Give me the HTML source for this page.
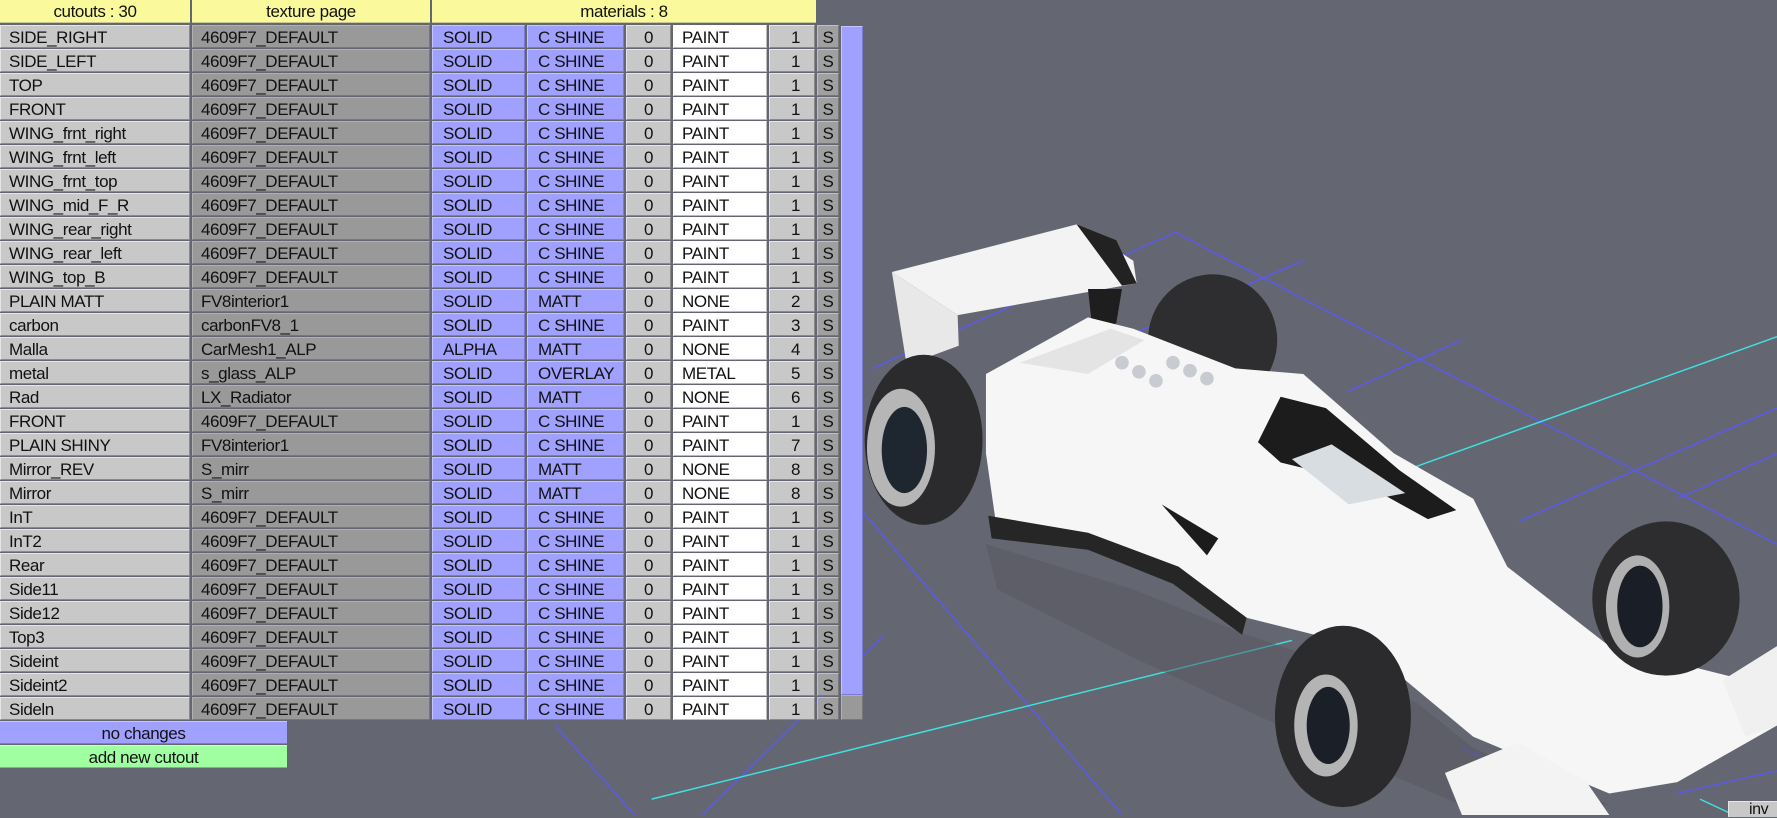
<!DOCTYPE html>
<html><head><meta charset="utf-8"><style>
*{margin:0;padding:0;box-sizing:border-box}
body{width:1777px;height:815px;background:#646671;overflow:hidden;position:relative;font-family:"Liberation Sans Narrow","Liberation Sans",sans-serif;font-size:17px;letter-spacing:-0.4px;color:#111}
svg{position:absolute;left:0;top:0}
.h{position:absolute;top:0;height:23px;background:#fafa9c;text-align:center;line-height:23px;border-bottom:1px solid #c8c890}
.r{position:absolute;left:0;height:24px;width:840px}
.r div{position:absolute;top:0;height:23px;line-height:23px;border:1px solid;border-color:#e6e6e6 #8a8a8a #8a8a8a #e6e6e6;white-space:nowrap;overflow:hidden}
.a{left:0;width:190px;background:#c8c8c8;padding-left:8px}
.b{left:192px;width:238px;background:#999;padding-left:8px;border-color:#b0b0b0 #777 #777 #b0b0b0!important}
.c{left:432px;width:93px;background:#a0a0ff;padding-left:10px;border-color:#c4c4ff #7a7ad0 #7a7ad0 #c4c4ff!important}
.d{left:527px;width:97px;background:#a0a0ff;padding-left:10px;border-color:#c4c4ff #7a7ad0 #7a7ad0 #c4c4ff!important}
.e{left:626px;width:45px;background:#c8c8c8;text-align:center}
.f{left:673px;width:94px;background:#fff;padding-left:8px;border-color:#fff #bbb #bbb #fff!important}
.g{left:769px;width:46px;background:#c8c8c8;text-align:right;padding-right:14px}
.s{left:817px;width:22px;background:#a0a0a0;text-align:center;border-color:#c0c0c0 #777 #777 #c0c0c0!important}
.btn{position:absolute;left:0;width:287px;height:23px;line-height:23px;text-align:center}
</style></head><body>
<svg width="1777" height="815" viewBox="0 0 1568 719" preserveAspectRatio="none">
<g stroke="#5a5af0" stroke-width="1.3" fill="none">
<line x1="770" y1="325" x2="1037" y2="205"/>
<line x1="1037" y1="205" x2="1568" y2="480"/>
<line x1="900" y1="330" x2="1568" y2="640"/>
<line x1="1150" y1="230" x2="940" y2="320"/>
<line x1="1290" y1="300" x2="1190" y2="345"/>
<line x1="1568" y1="400" x2="1480" y2="440"/>
<line x1="760" y1="450" x2="990" y2="719"/>
<line x1="780" y1="560" x2="620" y2="719"/>
<line x1="1480" y1="700" x2="1568" y2="680"/>
<line x1="1340" y1="460" x2="1568" y2="360"/>
<line x1="1290" y1="660" x2="1420" y2="719"/>
<line x1="1420" y1="700" x2="1568" y2="630"/>
<line x1="490" y1="640" x2="560" y2="719"/>
</g>
<g stroke="#3ee0e0" stroke-width="1.3">
<line x1="1240" y1="415" x2="1568" y2="297"/>
<line x1="575" y1="705" x2="1140" y2="565"/>
<line x1="1500" y1="705" x2="1530" y2="719"/>
</g>
<polygon points="870,480 1000,520 1100,560 1160,580 1250,620 1300,660 1420,710 1300,715 1150,650 1000,580 880,520" fill="#55565f" opacity="0.5"/>
<ellipse cx="1070" cy="300" rx="57" ry="58" fill="#2e2e30"/>
<polygon points="787,240 950,198 1000,230 1003,250 845,278" fill="#f3f3f3"/>
<polygon points="950,198 985,212 1003,250 990,252" fill="#222"/>
<polygon points="787,240 845,278 846,305 800,322" fill="#e8e8e8"/>
<polygon points="960,255 990,255 985,285 965,300" fill="#1e1e1e"/>
<ellipse cx="815" cy="388" rx="52" ry="75" fill="#2b2b2d"/>
<ellipse cx="795" cy="395" rx="30" ry="52" fill="#b6b6b6"/>
<ellipse cx="798" cy="397" rx="20" ry="38" fill="#1e2630"/>
<polygon points="870,330 960,280 1000,290 1090,325 1150,330 1230,400 1300,440 1330,500 1420,570 1540,600 1568,640 1480,690 1420,700 1300,650 1240,600 1160,560 1100,545 1040,500 960,470 880,470 870,400" fill="#f6f6f6"/>
<polygon points="872,455 960,470 1040,500 1100,545 1096,560 1035,515 960,485 875,475" fill="#262626"/>
<polygon points="900,320 980,290 1010,300 960,330" fill="#e4e4e4"/>
<polygon points="1110,390 1130,350 1170,360 1235,415 1285,450 1260,458 1200,425 1130,408" fill="#1c1c1c"/>
<polygon points="1140,405 1175,392 1240,435 1190,445" fill="#d8dde2"/>
<polygon points="1025,445 1075,475 1065,490" fill="#1c1c1c"/>
<ellipse cx="1470" cy="528" rx="65" ry="68" fill="#2d2d2f"/>
<ellipse cx="1445" cy="535" rx="28" ry="45" fill="#b0b0b0"/>
<ellipse cx="1447" cy="535" rx="20" ry="36" fill="#1a1f27"/>
<ellipse cx="1185" cy="632" rx="60" ry="80" fill="#2b2b2d"/>
<ellipse cx="1170" cy="640" rx="28" ry="45" fill="#b4b4b4"/>
<ellipse cx="1172" cy="640" rx="19" ry="34" fill="#1b2028"/>
<polygon points="1275,682 1340,655 1400,690 1420,719 1290,719" fill="#f3f3f3"/>
<polygon points="1520,600 1568,570 1568,640 1540,650" fill="#f0f0f0"/>
<g fill="#c8ccd2"><circle cx="990" cy="320" r="6"/><circle cx="1005" cy="328" r="6"/><circle cx="1020" cy="336" r="6"/><circle cx="1035" cy="320" r="6"/><circle cx="1050" cy="327" r="6"/><circle cx="1065" cy="334" r="6"/></g>
</svg>

<div class="h" style="left:0;width:190px">cutouts : 30</div>
<div class="h" style="left:192px;width:238px">texture page</div>
<div class="h" style="left:432px;width:384px">materials : 8</div>

<div class="r" style="top:25px"><div class="a">SIDE_RIGHT</div><div class="b">4609F7_DEFAULT</div><div class="c">SOLID</div><div class="d">C SHINE</div><div class="e">0</div><div class="f">PAINT</div><div class="g">1</div><div class="s">S</div></div>
<div class="r" style="top:49px"><div class="a">SIDE_LEFT</div><div class="b">4609F7_DEFAULT</div><div class="c">SOLID</div><div class="d">C SHINE</div><div class="e">0</div><div class="f">PAINT</div><div class="g">1</div><div class="s">S</div></div>
<div class="r" style="top:73px"><div class="a">TOP</div><div class="b">4609F7_DEFAULT</div><div class="c">SOLID</div><div class="d">C SHINE</div><div class="e">0</div><div class="f">PAINT</div><div class="g">1</div><div class="s">S</div></div>
<div class="r" style="top:97px"><div class="a">FRONT</div><div class="b">4609F7_DEFAULT</div><div class="c">SOLID</div><div class="d">C SHINE</div><div class="e">0</div><div class="f">PAINT</div><div class="g">1</div><div class="s">S</div></div>
<div class="r" style="top:121px"><div class="a">WING_frnt_right</div><div class="b">4609F7_DEFAULT</div><div class="c">SOLID</div><div class="d">C SHINE</div><div class="e">0</div><div class="f">PAINT</div><div class="g">1</div><div class="s">S</div></div>
<div class="r" style="top:145px"><div class="a">WING_frnt_left</div><div class="b">4609F7_DEFAULT</div><div class="c">SOLID</div><div class="d">C SHINE</div><div class="e">0</div><div class="f">PAINT</div><div class="g">1</div><div class="s">S</div></div>
<div class="r" style="top:169px"><div class="a">WING_frnt_top</div><div class="b">4609F7_DEFAULT</div><div class="c">SOLID</div><div class="d">C SHINE</div><div class="e">0</div><div class="f">PAINT</div><div class="g">1</div><div class="s">S</div></div>
<div class="r" style="top:193px"><div class="a">WING_mid_F_R</div><div class="b">4609F7_DEFAULT</div><div class="c">SOLID</div><div class="d">C SHINE</div><div class="e">0</div><div class="f">PAINT</div><div class="g">1</div><div class="s">S</div></div>
<div class="r" style="top:217px"><div class="a">WING_rear_right</div><div class="b">4609F7_DEFAULT</div><div class="c">SOLID</div><div class="d">C SHINE</div><div class="e">0</div><div class="f">PAINT</div><div class="g">1</div><div class="s">S</div></div>
<div class="r" style="top:241px"><div class="a">WING_rear_left</div><div class="b">4609F7_DEFAULT</div><div class="c">SOLID</div><div class="d">C SHINE</div><div class="e">0</div><div class="f">PAINT</div><div class="g">1</div><div class="s">S</div></div>
<div class="r" style="top:265px"><div class="a">WING_top_B</div><div class="b">4609F7_DEFAULT</div><div class="c">SOLID</div><div class="d">C SHINE</div><div class="e">0</div><div class="f">PAINT</div><div class="g">1</div><div class="s">S</div></div>
<div class="r" style="top:289px"><div class="a">PLAIN MATT</div><div class="b">FV8interior1</div><div class="c">SOLID</div><div class="d">MATT</div><div class="e">0</div><div class="f">NONE</div><div class="g">2</div><div class="s">S</div></div>
<div class="r" style="top:313px"><div class="a">carbon</div><div class="b">carbonFV8_1</div><div class="c">SOLID</div><div class="d">C SHINE</div><div class="e">0</div><div class="f">PAINT</div><div class="g">3</div><div class="s">S</div></div>
<div class="r" style="top:337px"><div class="a">Malla</div><div class="b">CarMesh1_ALP</div><div class="c">ALPHA</div><div class="d">MATT</div><div class="e">0</div><div class="f">NONE</div><div class="g">4</div><div class="s">S</div></div>
<div class="r" style="top:361px"><div class="a">metal</div><div class="b">s_glass_ALP</div><div class="c">SOLID</div><div class="d">OVERLAY</div><div class="e">0</div><div class="f">METAL</div><div class="g">5</div><div class="s">S</div></div>
<div class="r" style="top:385px"><div class="a">Rad</div><div class="b">LX_Radiator</div><div class="c">SOLID</div><div class="d">MATT</div><div class="e">0</div><div class="f">NONE</div><div class="g">6</div><div class="s">S</div></div>
<div class="r" style="top:409px"><div class="a">FRONT</div><div class="b">4609F7_DEFAULT</div><div class="c">SOLID</div><div class="d">C SHINE</div><div class="e">0</div><div class="f">PAINT</div><div class="g">1</div><div class="s">S</div></div>
<div class="r" style="top:433px"><div class="a">PLAIN SHINY</div><div class="b">FV8interior1</div><div class="c">SOLID</div><div class="d">C SHINE</div><div class="e">0</div><div class="f">PAINT</div><div class="g">7</div><div class="s">S</div></div>
<div class="r" style="top:457px"><div class="a">Mirror_REV</div><div class="b">S_mirr</div><div class="c">SOLID</div><div class="d">MATT</div><div class="e">0</div><div class="f">NONE</div><div class="g">8</div><div class="s">S</div></div>
<div class="r" style="top:481px"><div class="a">Mirror</div><div class="b">S_mirr</div><div class="c">SOLID</div><div class="d">MATT</div><div class="e">0</div><div class="f">NONE</div><div class="g">8</div><div class="s">S</div></div>
<div class="r" style="top:505px"><div class="a">InT</div><div class="b">4609F7_DEFAULT</div><div class="c">SOLID</div><div class="d">C SHINE</div><div class="e">0</div><div class="f">PAINT</div><div class="g">1</div><div class="s">S</div></div>
<div class="r" style="top:529px"><div class="a">InT2</div><div class="b">4609F7_DEFAULT</div><div class="c">SOLID</div><div class="d">C SHINE</div><div class="e">0</div><div class="f">PAINT</div><div class="g">1</div><div class="s">S</div></div>
<div class="r" style="top:553px"><div class="a">Rear</div><div class="b">4609F7_DEFAULT</div><div class="c">SOLID</div><div class="d">C SHINE</div><div class="e">0</div><div class="f">PAINT</div><div class="g">1</div><div class="s">S</div></div>
<div class="r" style="top:577px"><div class="a">Side11</div><div class="b">4609F7_DEFAULT</div><div class="c">SOLID</div><div class="d">C SHINE</div><div class="e">0</div><div class="f">PAINT</div><div class="g">1</div><div class="s">S</div></div>
<div class="r" style="top:601px"><div class="a">Side12</div><div class="b">4609F7_DEFAULT</div><div class="c">SOLID</div><div class="d">C SHINE</div><div class="e">0</div><div class="f">PAINT</div><div class="g">1</div><div class="s">S</div></div>
<div class="r" style="top:625px"><div class="a">Top3</div><div class="b">4609F7_DEFAULT</div><div class="c">SOLID</div><div class="d">C SHINE</div><div class="e">0</div><div class="f">PAINT</div><div class="g">1</div><div class="s">S</div></div>
<div class="r" style="top:649px"><div class="a">Sideint</div><div class="b">4609F7_DEFAULT</div><div class="c">SOLID</div><div class="d">C SHINE</div><div class="e">0</div><div class="f">PAINT</div><div class="g">1</div><div class="s">S</div></div>
<div class="r" style="top:673px"><div class="a">Sideint2</div><div class="b">4609F7_DEFAULT</div><div class="c">SOLID</div><div class="d">C SHINE</div><div class="e">0</div><div class="f">PAINT</div><div class="g">1</div><div class="s">S</div></div>
<div class="r" style="top:697px"><div class="a">Sideln</div><div class="b">4609F7_DEFAULT</div><div class="c">SOLID</div><div class="d">C SHINE</div><div class="e">0</div><div class="f">PAINT</div><div class="g">1</div><div class="s">S</div></div>

<div style="position:absolute;left:841px;top:26px;width:22px;height:669px;background:#a0a0ff;border:1px solid;border-color:#c4c4ff #7a7ad0 #7a7ad0 #c4c4ff"></div>
<div style="position:absolute;left:841px;top:695px;width:22px;height:25px;background:#999;border:1px solid;border-color:#b0b0b0 #777 #777 #b0b0b0"></div>

<div class="btn" style="top:721px;background:#a0a0ff;border-top:1px solid #c4c4ff;border-bottom:1px solid #7a7ad0">no changes</div>
<div class="btn" style="top:745px;background:#a0ffa0;border-top:1px solid #c8ffc8;border-bottom:1px solid #70c070">add new cutout</div>

<div style="position:absolute;left:1728px;top:801px;width:60px;height:16px;background:#c8c8c8;border-top:1px solid #e6e6e6;border-left:1px solid #e6e6e6;padding-left:20px;line-height:16px;font-size:16px">inv</div>
</body></html>
